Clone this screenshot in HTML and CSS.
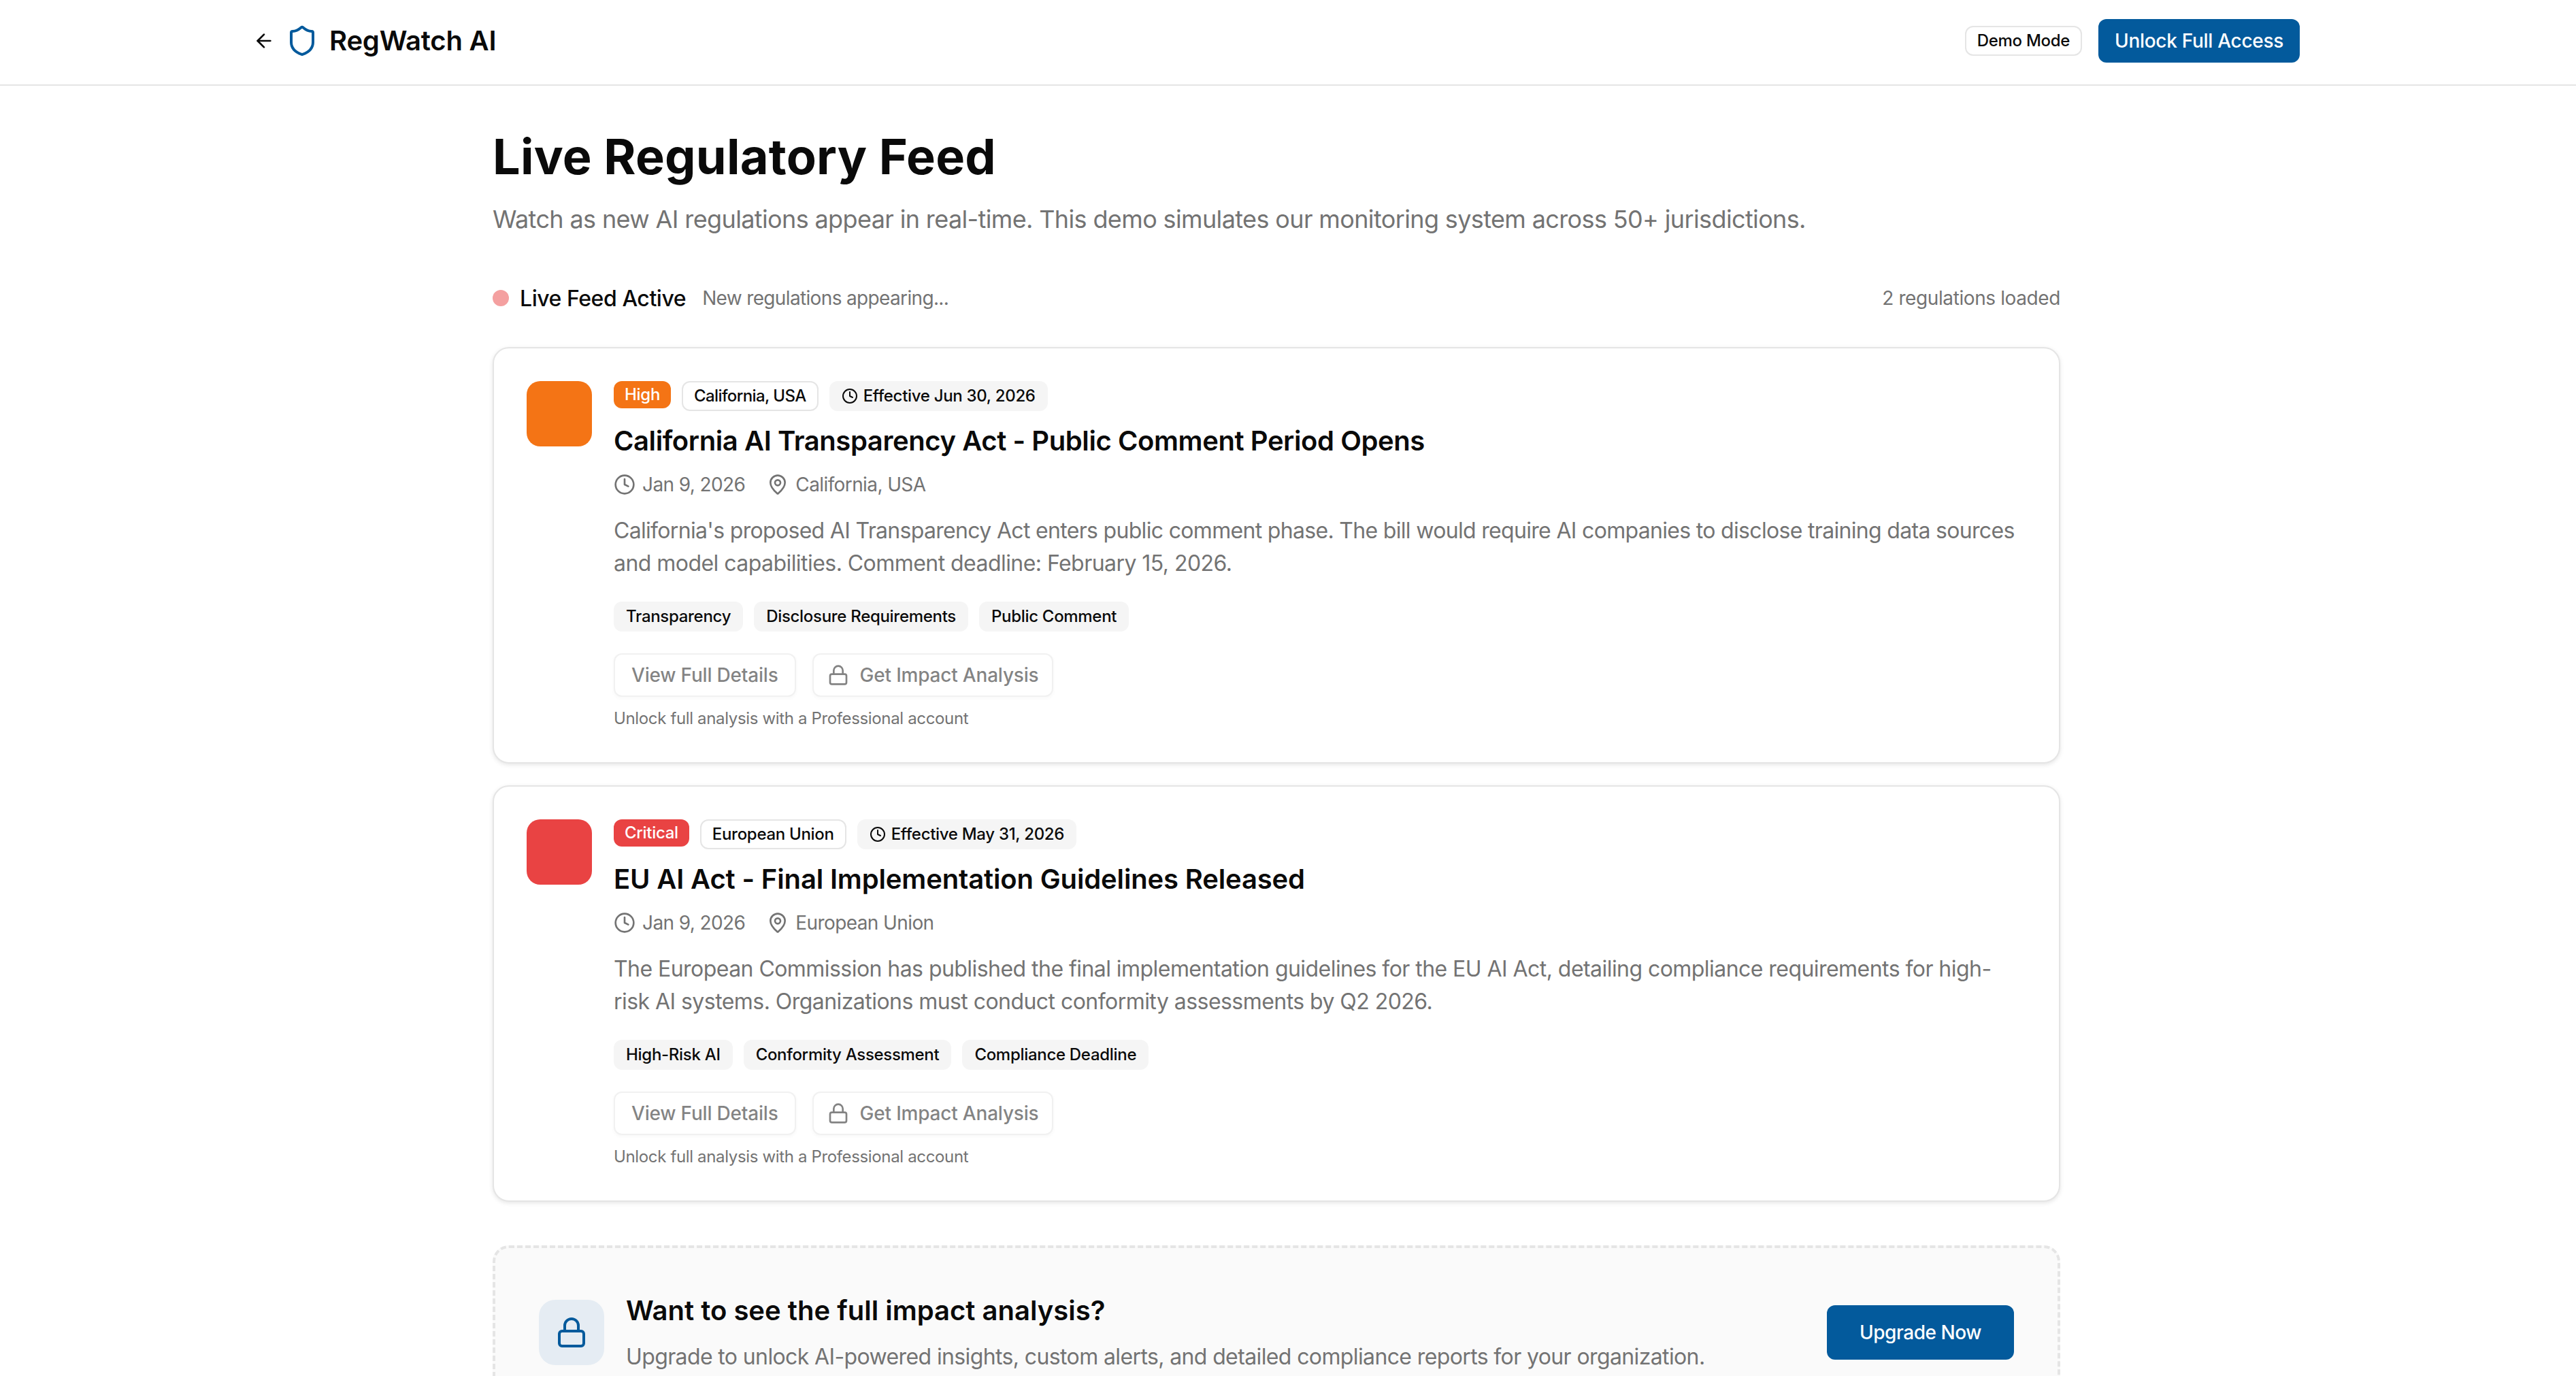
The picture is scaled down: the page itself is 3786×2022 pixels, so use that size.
FILE: index.html
```html
<!DOCTYPE html>
<html lang="en">

<head>
    <meta charset="UTF-8">
    <meta name="viewport" content="width=device-width, initial-scale=1.0">
    <title>RegWatch AI - Live Regulatory Feed</title>
    <link rel="stylesheet" href="styles.css">
</head>

<body>
    <svg class="sprite" aria-hidden="true">
        <symbol id="i-arrow" viewBox="0 0 24 24"><path d="m12 19-7-7 7-7"/><path d="M19 12H5"/></symbol>
        <symbol id="i-shield" viewBox="0 0 24 24"><path d="M20 13c0 5-3.5 7.5-7.66 8.95a1 1 0 0 1-.67-.01C7.5 20.5 4 18 4 13V6a1 1 0 0 1 1-1c2 0 4.5-1.2 6.24-2.72a1.17 1.17 0 0 1 1.52 0C14.51 3.81 17 5 19 5a1 1 0 0 1 1 1z"/></symbol>
        <symbol id="i-clock" viewBox="0 0 24 24"><circle cx="12" cy="12" r="10"/><polyline points="12 6 12 12 16 14"/></symbol>
        <symbol id="i-pin" viewBox="0 0 24 24"><path d="M20 10c0 4.993-5.539 10.193-7.399 11.799a1 1 0 0 1-1.202 0C9.539 20.193 4 14.993 4 10a8 8 0 0 1 16 0"/><circle cx="12" cy="10" r="3"/></symbol>
        <symbol id="i-lock" viewBox="0 0 24 24"><rect x="3" y="11" width="18" height="11" rx="2" ry="2"/><path d="M7 11V7a5 5 0 0 1 10 0v4"/></symbol>
    </svg>

    <header class="topbar">
        <div class="topbar-inner">
            <div class="brand">
                <svg class="icon icon-32"><use href="#i-arrow"/></svg>
                <svg class="icon icon-48 primary"><use href="#i-shield"/></svg>
                <span class="brand-name">RegWatch AI</span>
            </div>
            <div class="topbar-actions">
                <span class="badge badge-outline">Demo Mode</span>
                <a class="btn-primary btn-small">Unlock Full Access</a>
            </div>
        </div>
    </header>

    <main class="content">
        <h1>Live Regulatory Feed</h1>
        <p class="lead">Watch as new AI regulations appear in real-time. This demo simulates our monitoring system across 50+ jurisdictions.</p>

        <div class="status">
            <div class="status-left">
                <span class="dot"></span>
                <span class="status-label">Live Feed Active</span>
                <span class="muted-sm">New regulations appearing...</span>
            </div>
            <span class="muted-sm count">2 regulations loaded</span>
        </div>

        <article class="card">
            <div class="square orange"></div>
            <div class="card-body">
                <div class="badges">
                    <span class="badge orange">High</span>
                    <span class="badge badge-outline tight">California, USA</span>
                    <span class="badge badge-grey"><svg class="icon icon-24"><use href="#i-clock"/></svg>Effective Jun 30, 2026</span>
                </div>
                <h2 class="h2-tight">California AI Transparency Act - Public Comment Period Opens</h2>
                <div class="meta">
                    <span class="meta-item"><svg class="icon icon-32"><use href="#i-clock"/></svg>Jan 9, 2026</span>
                    <span class="meta-item"><svg class="icon icon-32"><use href="#i-pin"/></svg>California, USA</span>
                </div>
                <p class="desc"><span class="desc-tight">California's proposed AI Transparency Act enters public comment phase. The bill would require AI companies to disclose training data sources</span> and model capabilities. Comment deadline: February 15, 2026.</p>
                <div class="tags">
                    <span class="badge badge-grey">Transparency</span>
                    <span class="badge badge-grey">Disclosure Requirements</span>
                    <span class="badge badge-grey">Public Comment</span>
                </div>
                <div class="actions">
                    <span class="btn-ghost">View Full Details</span>
                    <span class="btn-ghost btn-icon"><svg class="icon icon-32"><use href="#i-lock"/></svg>Get Impact Analysis</span>
                </div>
                <p class="note">Unlock full analysis with a Professional account</p>
            </div>
        </article>

        <article class="card">
            <div class="square red"></div>
            <div class="card-body">
                <div class="badges">
                    <span class="badge red">Critical</span>
                    <span class="badge badge-outline">European Union</span>
                    <span class="badge badge-grey"><svg class="icon icon-24"><use href="#i-clock"/></svg>Effective May 31, 2026</span>
                </div>
                <h2>EU AI Act - Final Implementation Guidelines Released</h2>
                <div class="meta">
                    <span class="meta-item"><svg class="icon icon-32"><use href="#i-clock"/></svg>Jan 9, 2026</span>
                    <span class="meta-item"><svg class="icon icon-32"><use href="#i-pin"/></svg>European Union</span>
                </div>
                <p class="desc">The European Commission has published the final implementation guidelines for the EU AI Act, detailing compliance requirements for high-risk AI systems. Organizations must conduct conformity assessments by Q2 2026.</p>
                <div class="tags">
                    <span class="badge badge-grey">High-Risk AI</span>
                    <span class="badge badge-grey">Conformity Assessment</span>
                    <span class="badge badge-grey">Compliance Deadline</span>
                </div>
                <div class="actions">
                    <span class="btn-ghost">View Full Details</span>
                    <span class="btn-ghost btn-icon"><svg class="icon icon-32"><use href="#i-lock"/></svg>Get Impact Analysis</span>
                </div>
                <p class="note">Unlock full analysis with a Professional account</p>
            </div>
        </article>

        <section class="upsell">
            <div class="upsell-icon"><svg class="icon icon-48 primary"><use href="#i-lock"/></svg></div>
            <div class="upsell-text">
                <h2>Want to see the full impact analysis?</h2>
                <p class="desc">Upgrade to unlock AI-powered insights, custom alerts, and detailed compliance reports for your organization.</p>
            </div>
            <a class="btn-primary btn-large">Upgrade Now</a>
        </section>
    </main>
</body>

</html>
```

FILE: styles.css
```css
* {
    padding: 0;
    margin: 0;
    box-sizing: border-box;
}

html,
body {
    height: 100%;
    overflow: hidden;
}

body {
    background: #fff;
    color: #0a0a0a;
    font-family: Inter, "Liberation Sans", sans-serif;
    font-size: 32px;
}

.sprite {
    display: none;
}

.icon {
    flex: none;
    display: block;
    fill: none;
    stroke: currentColor;
    stroke-width: 2;
    stroke-linecap: round;
    stroke-linejoin: round;
}

.icon-24 {
    width: 24px;
    height: 24px;
}

.icon-32 {
    width: 32px;
    height: 32px;
}

.icon-48 {
    width: 48px;
    height: 48px;
}

.primary {
    color: #035a9c;
}

/* top bar */
.topbar {
    padding: 28px 34px 32px 0;
    border-bottom: 2px solid #e5e5e5;
}

.topbar-inner {
    display: flex;
    align-items: center;
    justify-content: space-between;
    width: 3008px;
    margin: 0 auto;
}

.brand {
    display: flex;
    align-items: center;
    gap: 16px;
}

.brand-name {
    font-size: 40px;
    font-weight: 600;
    line-height: 56px;
    letter-spacing: -0.2px;
}

.topbar-actions {
    display: flex;
    align-items: center;
    gap: 24px;
}

/* buttons */
.btn-primary {
    display: flex;
    align-items: center;
    justify-content: center;
    flex: none;
    background: #035a9c;
    color: #fff;
    font-weight: 500;
    font-size: 28px;
    border-radius: 12px;
    letter-spacing: -0.3px;
}

.btn-small {
    height: 64px;
    padding: 0 24px;
}

.btn-large {
    height: 80px;
    padding: 0 48px;
    letter-spacing: -0.45px;
}

.btn-ghost {
    display: flex;
    align-items: center;
    gap: 16px;
    height: 64px;
    padding: 0 24px;
    border: 2px solid #e5e5e5;
    border-radius: 12px;
    background: #fff;
    box-shadow: 0 2px 4px rgba(0, 0, 0, 0.05);
    font-size: 28px;
    font-weight: 500;
    letter-spacing: -0.2px;
    opacity: 0.5;
}

.btn-icon {
    padding: 0 20px;
}

/* badges */
.badge {
    display: inline-flex;
    align-items: center;
    gap: 8px;
    padding: 4px 16px;
    border-radius: 12px;
    font-size: 24px;
    font-weight: 500;
    line-height: 32px;
    letter-spacing: -0.3px;
    white-space: nowrap;
}

.badge.tight {
    letter-spacing: -0.6px;
}

.badge-outline {
    border: 2px solid #e5e5e5;
}

.badge-grey {
    border: 2px solid transparent;
    background: #f5f5f5;
}

.orange {
    background: #f47415;
    color: #fff;
}

.red {
    background: #e94343;
    color: #fff;
}

/* main column */
.content {
    width: 2304px;
    margin-left: 724px;
    padding-top: 64px;
}

h1 {
    font-size: 72px;
    font-weight: 700;
    line-height: 80px;
    letter-spacing: 0.25px;
    margin-bottom: 24px;
}

.lead {
    font-size: 36px;
    line-height: 56px;
    letter-spacing: -0.63px;
    color: #737373;
}

.status {
    display: flex;
    align-items: center;
    justify-content: space-between;
    height: 48px;
    margin: 64px 0 48px;
}

.status-left {
    display: flex;
    align-items: center;
}

.dot {
    width: 24px;
    height: 24px;
    border-radius: 50%;
    background: #f4a0a0;
    margin-right: 16px;
}

.status-label {
    font-weight: 500;
    letter-spacing: -0.45px;
    margin-right: 24px;
}

.muted-sm {
    font-size: 28px;
    letter-spacing: -0.65px;
    color: #737373;
}

.count {
    letter-spacing: -0.4px;
}

/* cards */
.card {
    display: flex;
    gap: 32px;
    padding: 48px;
    margin-bottom: 32px;
    background: #fff;
    border: 2px solid #e5e5e5;
    border-radius: 24px;
    box-shadow: 0 2px 6px rgba(0, 0, 0, 0.1);
}

.square {
    flex: none;
    width: 96px;
    height: 96px;
    border-radius: 20px;
}

.card-body {
    flex: 1;
    min-width: 0;
}

.badges,
.tags {
    display: flex;
    align-items: flex-start;
    gap: 16px;
}

h2 {
    font-size: 40px;
    font-weight: 600;
    line-height: 56px;
    letter-spacing: -0.15px;
}

.h2-tight {
    letter-spacing: -0.42px;
}

.card h2 {
    margin: 16px 0;
}

.meta {
    display: flex;
    gap: 32px;
    color: #737373;
    font-size: 28px;
    line-height: 40px;
    letter-spacing: -0.6px;
}

.meta-item {
    display: flex;
    align-items: center;
    gap: 10px;
}

.desc {
    font-size: 32px;
    line-height: 48px;
    letter-spacing: -0.55px;
    color: #737373;
}

.desc-tight {
    letter-spacing: -0.68px;
}

.card .desc {
    margin-top: 24px;
}

.tags {
    margin-top: 32px;
}

.actions {
    display: flex;
    gap: 24px;
    margin-top: 32px;
}

.note {
    margin-top: 16px;
    font-size: 24px;
    line-height: 32px;
    letter-spacing: -0.35px;
    color: #737373;
}

/* upgrade box */
.upsell {
    display: flex;
    align-items: center;
    gap: 32px;
    padding: 64px;
    margin-top: 64px;
    background: #fafafa;
    border: 4px dashed #e5e5e5;
    border-radius: 24px;
}

.upsell-icon {
    display: flex;
    align-items: center;
    justify-content: center;
    flex: none;
    width: 96px;
    height: 96px;
    border-radius: 24px;
    background: #e5ecf3;
}

.upsell-text {
    flex: 1;
}

.upsell h2 {
    margin-bottom: 16px;
    letter-spacing: 0;
}

.upsell .desc {
    letter-spacing: -0.62px;
}
```
